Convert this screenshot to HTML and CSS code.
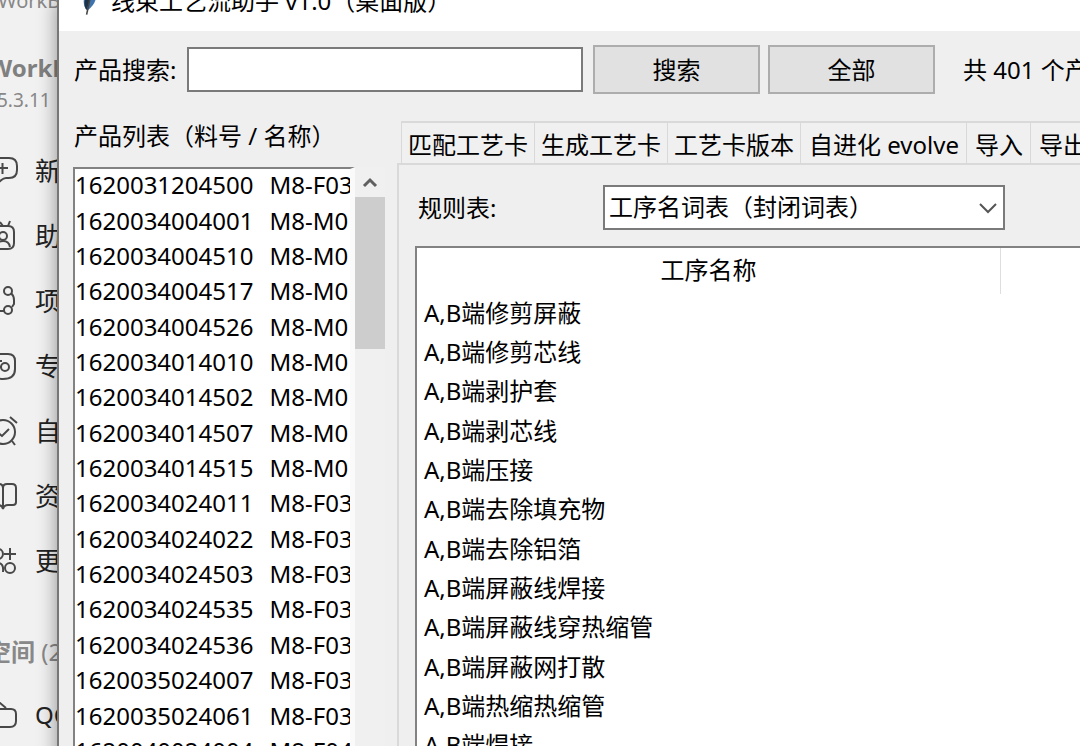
FILE: index.html
```html
<!DOCTYPE html>
<html lang="zh-CN">
<head>
<meta charset="utf-8">
<title>线束工艺流助手 v1.0（桌面版）</title>
<link rel="stylesheet" href="styles.css">
</head>
<body>
<div class="desktop">
  <aside class="sidebar">
    <div class="side-title">WorkB</div>
    <div class="side-brand">WorkB</div>
    <div class="side-version">5.3.11</div>
    <nav class="side-nav">
      <a class="side-item" href="#"><svg viewBox="0 0 32 32"><path d="M14 3h8q8 0 8 8v4q0 8-8 8h-3q-3 0-8 5v-5q-5-1-5-8v-4q0-8 8-8zM10 13h11M15.500 8v11"/></svg>新</a>
      <a class="side-item" href="#"><svg viewBox="0 0 32 32"><path d="M11 6h10q6 0 6 6v11q0 6-6 6h-11q-6 0-6-6v-11q0-6 6-6M13 2l3 4 5 0 2-5M9 27q1-6 7-6t7 6"/><circle cx="16" cy="16" r="4"/></svg>助</a>
      <a class="side-item" href="#"><svg viewBox="0 0 32 32"><circle cx="21" cy="6" r="4"/><circle cx="21" cy="25" r="4"/><path d="M24 8q3 3 3 7v4l-2 3M4 5h9M6 19v3q0 4 4 4h7"/></svg>项</a>
      <a class="side-item" href="#"><svg viewBox="0 0 32 32"><path d="M12 4h9q7 0 7 7v8q0 10-12 10q-12 0-12-10v-8q0-7 8-7zM7 11h8M7 17h7"/><circle cx="18" cy="17" r="4"/></svg>专</a>
      <a class="side-item" href="#"><svg viewBox="0 0 32 32"><circle cx="16" cy="17" r="12"/><path d="M10 17l5 4 7-7M23 2l7 6M25 26l3 4"/></svg>自</a>
      <a class="side-item" href="#"><svg viewBox="0 0 32 32"><path d="M16 8q0-4 4-4h5q4 0 4 4v14q0 3-3 3h-5q-4 0-5 4q-1-4-5-4h-6v-21h7q4 0 4 4v21"/></svg>资</a>
      <a class="side-item" href="#"><svg viewBox="0 0 32 32"><circle cx="11" cy="9" r="5"/><path d="M5 27q0-9 6-9t5 9M23 3v12M17 9h12"/><circle cx="23" cy="23" r="5"/></svg>更</a>
    </nav>
    <div class="side-section">空间 <span>(2</span></div>
    <a class="side-item space" href="#"><svg viewBox="0 0 32 32"><path d="M4 10h20q5 0 5 5v7q0 6-6 6H4M4 4h9l6 5"/></svg>QC</a>
  </aside>

  <main class="window">
    <header class="titlebar">
      <svg class="app-icon" viewBox="0 0 24 40"><path d="M8 30Q0 18 16 0Q28 18 10 32z" fill="#3e73ae"/><path d="M8 30Q3 20 14 5Q14 20 9 31z" fill="#1d3147"/><path d="M16 4L9 37" stroke="#444" stroke-width="2"/></svg>
      <h1>线束工艺流助手 v1.0（桌面版）</h1>
    </header>

    <form class="toolbar">
      <label for="search">产品搜索:</label>
      <input id="search" type="text">
      <button type="button">搜索</button>
      <button type="button">全部</button>
      <output>共 401 个产</output>
    </form>

    <div class="workspace">
      <section class="products">
        <h2>产品列表（料号 / 名称）</h2>
        <div class="list-area">
          <ul class="product-list">
            <li><span>1620031204500</span><span>M8-F03</span></li>
            <li><span>1620034004001</span><span>M8-M0</span></li>
            <li><span>1620034004510</span><span>M8-M0</span></li>
            <li><span>1620034004517</span><span>M8-M0</span></li>
            <li><span>1620034004526</span><span>M8-M0</span></li>
            <li><span>1620034014010</span><span>M8-M0</span></li>
            <li><span>1620034014502</span><span>M8-M0</span></li>
            <li><span>1620034014507</span><span>M8-M0</span></li>
            <li><span>1620034014515</span><span>M8-M0</span></li>
            <li><span>1620034024011</span><span>M8-F03</span></li>
            <li><span>1620034024022</span><span>M8-F03</span></li>
            <li><span>1620034024503</span><span>M8-F03</span></li>
            <li><span>1620034024535</span><span>M8-F03</span></li>
            <li><span>1620034024536</span><span>M8-F03</span></li>
            <li><span>1620035024007</span><span>M8-F03</span></li>
            <li><span>1620035024061</span><span>M8-F03</span></li>
            <li><span>1620040024004</span><span>M8-F04</span></li>
          </ul>
          <div class="scrollbar">
            <svg viewBox="0 0 16 12"><path d="M2 10L8 4L14 10"/></svg>
            <div class="thumb"></div>
          </div>
        </div>
      </section>

      <section class="notebook">
        <div class="tabs" role="tablist">
          <button type="button" role="tab">匹配工艺卡</button>
          <button type="button" role="tab">生成工艺卡</button>
          <button type="button" role="tab">工艺卡版本</button>
          <button type="button" role="tab">自进化 evolve</button>
          <button type="button" role="tab">导入</button>
          <button type="button" role="tab">导出</button>
        </div>
        <div class="pane">
          <div class="rule-row">
            <label for="rules">规则表:</label>
            <div class="combo">
              <select id="rules"><option>工序名词表（封闭词表）</option></select>
              <svg viewBox="0 0 18 12"><path d="M1 2L9 10L17 2"/></svg>
            </div>
          </div>
          <div class="table-frame">
            <table>
              <thead><tr><th class="name">工序名称</th><th></th></tr></thead>
              <tbody>
                <tr><td>A,B端修剪屏蔽</td><td></td></tr>
                <tr><td>A,B端修剪芯线</td><td></td></tr>
                <tr><td>A,B端剥护套</td><td></td></tr>
                <tr><td>A,B端剥芯线</td><td></td></tr>
                <tr><td>A,B端压接</td><td></td></tr>
                <tr><td>A,B端去除填充物</td><td></td></tr>
                <tr><td>A,B端去除铝箔</td><td></td></tr>
                <tr><td>A,B端屏蔽线焊接</td><td></td></tr>
                <tr><td>A,B端屏蔽线穿热缩管</td><td></td></tr>
                <tr><td>A,B端屏蔽网打散</td><td></td></tr>
                <tr><td>A,B端热缩热缩管</td><td></td></tr>
                <tr><td>A,B端焊接</td><td></td></tr>
              </tbody>
            </table>
          </div>
        </div>
      </section>
    </div>
  </main>
</div>
</body>
</html>
```

FILE: styles.css
```css
* {
  box-sizing: border-box;
}

body {
  margin: 0;
  overflow: hidden;
  background: #f1f1f1;
  color: #000;
  font-family: "Noto Sans", "Noto Sans CJK SC", sans-serif;
  font-size: 24px;
  line-height: 32px;
}

h1, h2, ul {
  margin: 0;
  padding: 0;
  font-size: 24px;
  font-weight: 400;
}

input, button, select {
  font: inherit;
  color: inherit;
  border-radius: 0;
  margin: 0;
}

.desktop {
  display: grid;
  grid-template-columns: 57px minmax(0, 1fr);
  height: 100vh;
}

/* Sidebar of the window behind */
.sidebar {
  overflow: hidden;
  white-space: nowrap;
  color: #888;
}

.side-title {
  margin: -15px 0 0 -2px;
  font-size: 20px;
}

.side-brand {
  margin: 35px 0 0 -11px;
  color: #808080;
  font-weight: 700;
}

.side-version {
  margin-left: -3px;
  font-size: 19px;
}

.side-nav {
  margin-top: 22px;
}

.side-item {
  display: flex;
  align-items: center;
  gap: 16px;
  height: 65px;
  margin-left: -13px;
  color: #222;
  font-size: 26px;
  text-decoration: none;
}

.side-item.space {
  font-size: 24px;
}

.side-item svg {
  flex: none;
  width: 32px;
  height: 32px;
  fill: none;
  stroke: #484848;
  stroke-width: 2;
}

.side-section {
  margin: 43px 0 14px -13px;
  font-weight: 700;
}

.side-section span {
  font-weight: 400;
}

/* Application window */
.window {
  display: flex;
  flex-direction: column;
  height: calc(100vh + 24px);
  overflow: hidden;
  border-left: 2px solid #777;
  background: #efefef;
  box-shadow: 0 0 18px rgba(0, 0, 0, 0.4);
  white-space: nowrap;
}

.titlebar {
  display: flex;
  flex: none;
  align-items: center;
  gap: 10px;
  height: 58px;
  margin-top: -27px;
  padding: 0 0 2px 18px;
  background: #fff;
}

.app-icon {
  width: 24px;
  height: 32px;
}

.toolbar {
  display: flex;
  flex: none;
  align-items: center;
  height: 63px;
  padding: 14px 0 0 15px;
}

.toolbar label {
  flex: none;
  width: 113px;
}

.toolbar input {
  flex: none;
  width: 396px;
  height: 45px;
  margin-right: 10px;
  border: 2px solid #7a7a7a;
  background: #fff;
}

.toolbar button {
  flex: none;
  width: 167px;
  height: 49px;
  margin-right: 8px;
  border: 2px solid #adadad;
  background: #e1e1e1;
}

.toolbar output {
  margin-left: 20px;
}

.workspace {
  display: flex;
  flex: 1;
  min-height: 0;
}

.products {
  display: flex;
  flex: none;
  flex-direction: column;
  width: 326px;
  padding-left: 14px;
}

.products h2 {
  margin: 26px 0 15px 1px;
}

.list-area {
  display: flex;
  flex: 1;
  min-height: 0;
}

.product-list {
  display: flex;
  flex: 1;
  flex-direction: column;
  overflow: hidden;
  border: solid #828282;
  border-width: 2px 0 0 2px;
  border-right: 5px solid #fafafa;
  background: #fff;
  list-style: none;
}

.product-list li {
  display: flex;
  flex: 1;
  align-items: center;
  gap: 16px;
  padding-bottom: 3px;
}

.scrollbar {
  width: 30px;
  background: #f0f0f0;
}

.scrollbar svg {
  display: block;
  width: 16px;
  height: 12px;
  margin: 9px 7px 9px;
  fill: none;
  stroke: #606060;
  stroke-width: 3;
}

.thumb {
  height: 152px;
  background: #cdcdcd;
}

.notebook {
  display: flex;
  flex: 1;
  flex-direction: column;
  min-width: 0;
  margin-left: 12px;
  padding-top: 27px;
  overflow: hidden;
}

.tabs {
  display: flex;
  flex: none;
  height: 42px;
  padding-left: 4px;
}

.tabs button {
  flex: none;
  padding: 3px 6px 0;
  border: solid #d9d9d9;
  border-width: 2px 1px 0 0;
  background: #f0f0f0;
}

.tabs button:first-child {
  border-left-width: 1px;
}

.tabs button:nth-child(n + 4) {
  padding-left: 8px;
  padding-right: 7px;
}

.pane {
  display: flex;
  flex: 1;
  flex-direction: column;
  min-height: 0;
  padding: 20px 0 4px 16px;
  border: solid #d9d9d9;
  border-width: 2px 0 0 2px;
}

.rule-row {
  display: flex;
  align-items: center;
  padding-left: 3px;
}

.rule-row label {
  width: 185px;
}

.combo {
  position: relative;
  width: 402px;
  height: 45px;
}

.combo select {
  width: 100%;
  height: 100%;
  padding: 0 40px 2px 4px;
  border: 2px solid #7a7a7a;
  background: #fff;
  appearance: none;
}

.combo svg {
  position: absolute;
  top: 17px;
  right: 8px;
  width: 18px;
  height: 12px;
  fill: none;
  stroke: #555;
  stroke-width: 2;
  pointer-events: none;
}

.table-frame {
  display: flex;
  flex: 1;
  min-height: 0;
  margin-top: 16px;
  border: solid #828282;
  border-width: 2px 0 0 2px;
  background: #fff;
}

table {
  width: 100%;
  height: 100%;
  border-collapse: separate;
  border-spacing: 0;
}

th {
  height: 46px;
  padding: 0 0 2px;
  font-weight: 400;
}

.name {
  width: 584px;
  border-right: 1px solid #dedede;
}

td {
  padding: 0 0 2px 7px;
}
```
